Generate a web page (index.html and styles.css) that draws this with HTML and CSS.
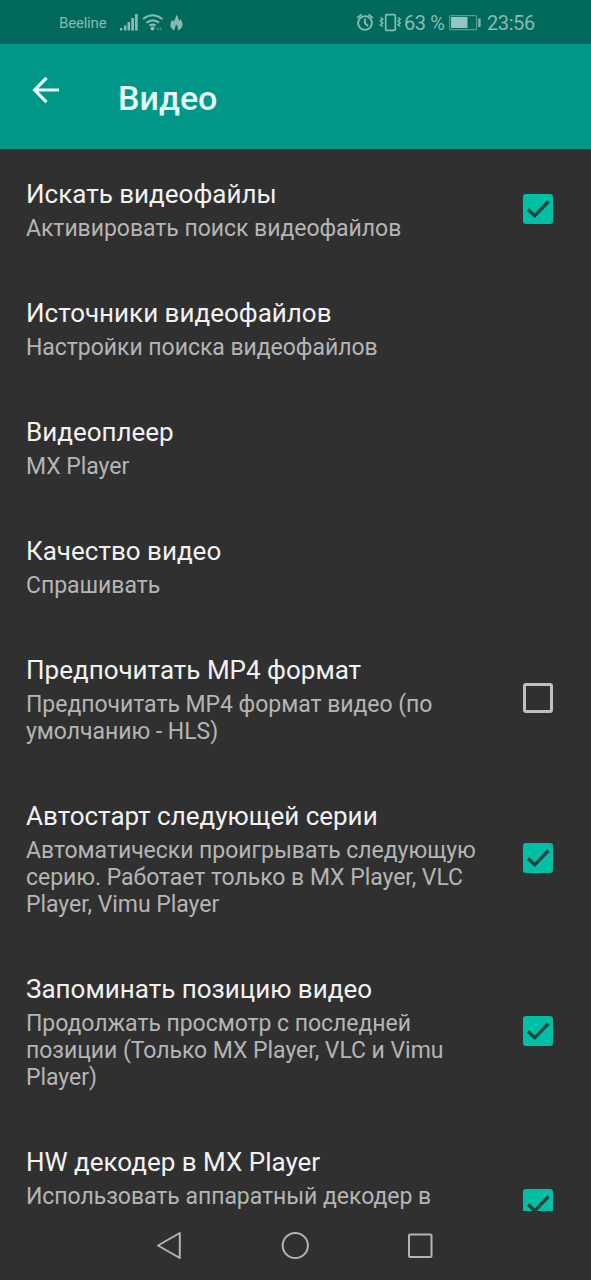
FILE: index.html
```html
<!DOCTYPE html>
<html lang="ru">
<head>
<meta charset="utf-8">
<title>Видео</title>
<link rel="stylesheet" href="styles.css">
</head>
<body>
<div class="screen">
  <div class="status">
    <span class="carrier">Beeline</span>
    <svg class="signals" width="66" height="20" viewBox="119 13 66 20">
      <g fill="#86bbb4">
        <rect x="120" y="28" width="2.2" height="2.5"/><rect x="124" y="25.5" width="2.4" height="5"/><rect x="127.500" y="22" width="2.600" height="8.500"/><rect x="131.300" y="18" width="2.700" height="12.500"/><rect x="135" y="14" width="2.700" height="16.500"/>
        <circle cx="152.500" cy="28.500" r="2"/>
        <path d="M156.300 29l2-2.300v4.300zM159.700 26.700l2 2.100-2 2.200z" opacity=".5"/>
        <path d="M176 14.800c2.300 2 2.800 4 2.900 6.200.8-.5 1.200-1.200 1.300-2.100 1.700 1.800 2.500 3.700 2.300 5.900-.3 3.200-2.300 5-5 5.700.8-2.300.4-4.200-1.500-6.300-.2 2.300-1.800 3.500-1.200 6.200-2.900-.8-4.500-2.900-4.400-5.600.1-2 1-3.300 1.500-4.900.8.500 1.100 1.100 1.300 1.800 1.900-1.700 2.900-4 2.800-6.900z"/>
      </g>
      <path d="M143 19q9.500-7.500 19.500 0M146.500 22.700q6-4.800 12.500 0M149.500 25.700q3-2.300 6 0" fill="none" stroke="#86bbb4" stroke-width="2.100"/>
    </svg>
    <div class="status-right">
      <svg width="46" height="20" viewBox="356 13 46 20" fill="none" stroke="#86bbb4">
        <circle cx="365" cy="23" r="6.900" stroke-width="1.900"/>
        <path d="M365 18.500v5l3.200 2.500M357.200 18l4.300-3.600M372.800 18l-4.300-3.600" stroke-width="1.800"/>
        <rect x="385.700" y="14.700" width="9.600" height="15.600" rx="1" stroke-width="1.700"/>
        <path d="M380.500 17.500l2.200 1.800-2.200 1.800 2.200 1.800-2.200 1.800 2.200 1.800M398 17.500l2.200 1.800-2.200 1.800 2.200 1.800-2.200 1.800 2.200 1.800" stroke-width="1.500"/>
      </svg>
      <span class="percent">63 %</span>
      <svg class="battery" width="34" height="16" viewBox="449 15 34 16">
        <rect x="450.600" y="15.700" width="27" height="14" rx="1" fill="none" stroke="#559b91" stroke-width="1.200"/>
        <rect x="452" y="17" width="16.500" height="11" fill="#96c5bf"/>
        <rect x="479.300" y="18.500" width="2.300" height="8.500" fill="#86bbb4"/>
      </svg>
      <span class="clock">23:56</span>
    </div>
  </div>
  <header class="toolbar">
    <svg class="back" width="30" height="30" viewBox="0 0 30 30" fill="none" stroke="#eafffb" stroke-width="3.200"><path d="M28 15H4M15.500 2.800L3.700 15l11.800 12.200"/></svg>
    <h1>Видео</h1>
  </header>
  <main class="list">
    <div class="row"><div class="text"><div class="title">Искать видеофайлы</div><div class="sub">Активировать поиск видеофайлов</div></div><div class="box on"><svg viewBox="0 0 30 30"><path d="M5 15.500l6.800 6.300L25.500 7.500"/></svg></div></div>
    <div class="row"><div class="text"><div class="title">Источники видеофайлов</div><div class="sub">Настройки поиска видеофайлов</div></div></div>
    <div class="row"><div class="text"><div class="title">Видеоплеер</div><div class="sub">MX Player</div></div></div>
    <div class="row"><div class="text"><div class="title">Качество видео</div><div class="sub">Спрашивать</div></div></div>
    <div class="row"><div class="text"><div class="title">Предпочитать MP4 формат</div><div class="sub">Предпочитать MP4 формат видео (по<br>умолчанию - HLS)</div></div><div class="box"></div></div>
    <div class="row"><div class="text"><div class="title">Автостарт следующей серии</div><div class="sub">Автоматически проигрывать следующую<br>серию. Работает только в MX Player, VLC<br>Player, Vimu Player</div></div><div class="box on"><svg viewBox="0 0 30 30"><path d="M5 15.500l6.800 6.300L25.500 7.500"/></svg></div></div>
    <div class="row"><div class="text"><div class="title">Запоминать позицию видео</div><div class="sub">Продолжать просмотр с последней<br>позиции (Только MX Player, VLC и Vimu<br>Player)</div></div><div class="box on"><svg viewBox="0 0 30 30"><path d="M5 15.500l6.800 6.300L25.500 7.500"/></svg></div></div>
    <div class="row last"><div class="text"><div class="title">HW декодер в MX Player</div><div class="sub">Использовать аппаратный декодер в</div></div><div class="box on"><svg viewBox="0 0 30 30"><path d="M5 15.500l6.800 6.300L25.500 7.500"/></svg></div></div>
  </main>
  <nav class="nav">
    <svg width="591" height="69" viewBox="0 1211 591 69" fill="none" stroke="#b4b4b4" stroke-width="2" stroke-linejoin="round">
      <path d="M158 1245.500L179.800 1233v25z"/>
      <circle cx="295.300" cy="1245.500" r="12.600"/>
      <rect x="409" y="1234.500" width="22.500" height="22.500" rx="1"/>
    </svg>
  </nav>
</div>
</body>
</html>
```

FILE: styles.css
```css
* { box-sizing: border-box; }
body { margin: 0; background: #303030; font-family: Roboto, "Noto Sans", sans-serif; }
.screen { width: 591px; height: 1280px; display: flex; flex-direction: column; overflow: hidden; }
.status { height: 44px; flex: none; background: #00695c; color: #86bbb4; display: flex; align-items: center; padding: 2px 56px 0 59px; }
.carrier { width: 48px; font-size: 15px; letter-spacing: -0.2px; }
.signals { margin-left: 12px; }
.status-right { display: flex; align-items: center; margin-left: auto; }
.percent { width: 39px; font-size: 20px; letter-spacing: -0.4px; margin-left: 2px; white-space: nowrap; }
.battery { margin-left: 5px; }
.clock { width: 48px; font-size: 20px; letter-spacing: -0.4px; margin-left: 5px; }
.toolbar { height: 105px; flex: none; background: #009688; display: flex; align-items: center; padding-left: 31px; }
.back { margin-top: -13px; }
.toolbar h1 { margin: 2px 0 0 57px; font-size: 34px; line-height: 40px; font-weight: 500; color: #e6f7f5; }
.list { height: 1062px; flex: none; overflow: hidden; }
.row { display: flex; align-items: center; justify-content: space-between; padding: 0 38px 0 26px; }
.text { padding: 28px 0 26px; }
.title { margin-bottom: 4px; font-size: 26px; line-height: 34px; color: #f2f2f2; white-space: nowrap; }
.sub { font-size: 23px; letter-spacing: -0.04px; line-height: 27px; color: #b5b5b5; white-space: nowrap; }
.box { width: 30px; height: 30px; flex: none; border: 3px solid #c0c0c0; border-radius: 3px; }
.box.on { border: 0; background: #00bfa5; }
.box svg { display: block; width: 30px; height: 30px; fill: none; stroke: #22423e; stroke-width: 3.3; }
.last { height: 173px; }
.last .text { align-self: flex-start; }
.nav { height: 69px; flex: none; background: #303030; }
.nav svg { display: block; }
```
